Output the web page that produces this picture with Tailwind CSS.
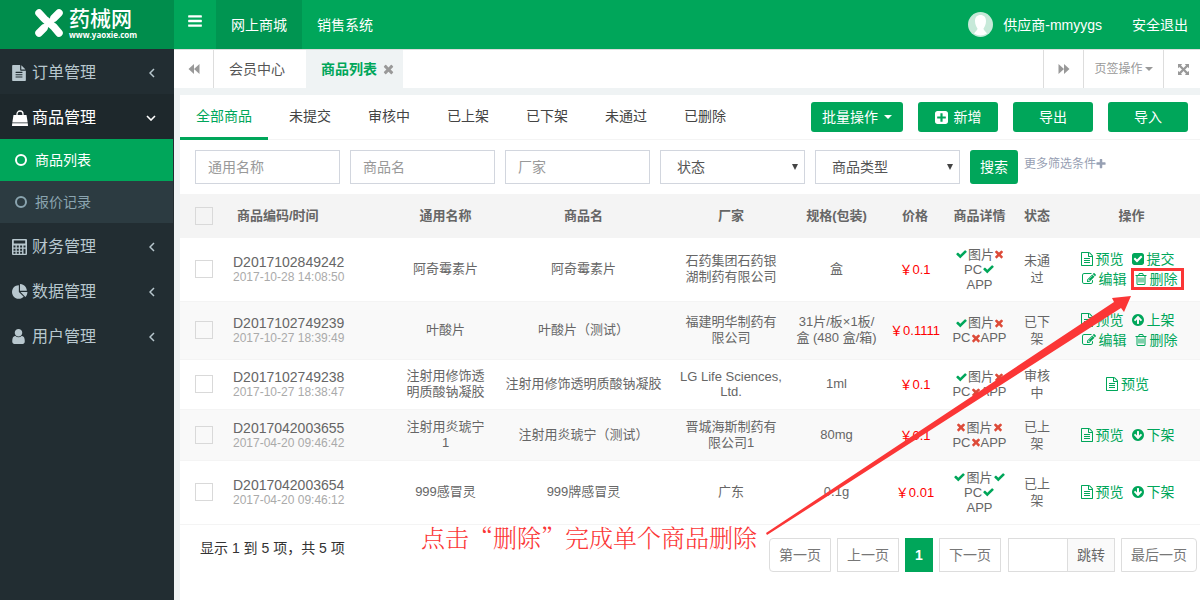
<!DOCTYPE html>
<html lang="zh-CN">
<head>
<meta charset="utf-8">
<title>商品列表</title>
<script src="https://cdn.jsdelivr.net/npm/@tailwindcss/browser@4"></script>
</head>
<body class="min-h-screen flex flex-col overflow-x-hidden bg-[#222d32] text-sm text-[#666] font-['Liberation_Sans','Noto_Sans_CJK_SC',sans-serif]">
<svg class="hidden" aria-hidden="true">
  <symbol id="bars" viewBox="0 0 1792 1792"><path d="M1664 1344v128q0 26-19 45t-45 19h-1408q-26 0-45-19t-19-45v-128q0-26 19-45t45-19h1408q26 0 45 19t19 45zm0-512v128q0 26-19 45t-45 19h-1408q-26 0-45-19t-19-45v-128q0-26 19-45t45-19h1408q26 0 45 19t19 45zm0-512v128q0 26-19 45t-45 19h-1408q-26 0-45-19t-19-45v-128q0-26 19-45t45-19h1408q26 0 45 19t19 45z"/></symbol>
  <symbol id="check" viewBox="0 0 1792 1792"><path d="M1671 566q0 40-28 68l-724 724-136 136q-28 28-68 28t-68-28l-136-136-362-362q-28-28-28-68t28-68l136-136q28-28 68-28t68 28l294 295 656-657q28-28 68-28t68 28l136 136q28 28 28 68z"/></symbol>
  <symbol id="times" viewBox="192 0 1408 1792"><path d="M1490 1322q0 40-28 68l-136 136q-28 28-68 28t-68-28l-294-294-294 294q-28 28-68 28t-68-28l-136-136q-28-28-28-68t28-68l294-294-294-294q-28-28-28-68t28-68l136-136q28-28 68-28t68 28l294 294 294-294q28-28 68-28t68 28l136 136q28 28 28 68t-28 68l-294 294 294 294q28 28 28 68z"/></symbol>
  <symbol id="plus" viewBox="192 128 1408 1536"><path d="M1600 736v192q0 40-28 68t-68 28h-416v416q0 40-28 68t-68 28h-192q-40 0-68-28t-28-68v-416h-416q-40 0-68-28t-28-68v-192q0-40 28-68t68-28h416v-416q0-40 28-68t68-28h192q40 0 68 28t28 68v416h416q40 0 68 28t28 68z"/></symbol>
  <symbol id="plus-square" viewBox="128 128 1536 1536"><path d="M1408 960v-128q0-26-19-45t-45-19h-320v-320q0-26-19-45t-45-19h-128q-26 0-45 19t-19 45v320h-320q-26 0-45 19t-19 45v128q0 26 19 45t45 19h320v320q0 26 19 45t45 19h128q26 0 45-19t19-45v-320h320q26 0 45-19t19-45zm256-544v960q0 119-84.5 203.5t-203.5 84.5h-960q-119 0-203.5-84.5t-84.5-203.5v-960q0-119 84.5-203.5t203.5-84.5h960q119 0 203.5 84.5t84.5 203.5z"/></symbol>
  <symbol id="check-square" viewBox="128 0 1536 1792"><path d="M813 1299l614-614q19-19 19-45t-19-45l-102-102q-19-19-45-19t-45 19l-467 467-211-211q-19-19-45-19t-45 19l-102 102q-19 19-19 45t19 45l358 358q19 19 45 19t45-19zm851-883v960q0 119-84.5 203.5t-203.5 84.5h-960q-119 0-203.5-84.5t-84.5-203.5v-960q0-119 84.5-203.5t203.5-84.5h960q119 0 203.5 84.5t84.5 203.5z"/></symbol>
  <symbol id="file" viewBox="128 0 1536 1792"><path d="M1596 476q14 14 28 36h-472v-472q22 14 36 28zm-476 164h544v1056q0 40-28 68t-68 28h-1344q-40 0-68-28t-28-68v-1600q0-40 28-68t68-28h800v544q0 40 28 68t68 28zm160 736v-64q0-14-9-23t-23-9h-704q-14 0-23 9t-9 23v64q0 14 9 23t23 9h704q14 0 23-9t9-23zm0-256v-64q0-14-9-23t-23-9h-704q-14 0-23 9t-9 23v64q0 14 9 23t23 9h704q14 0 23-9t9-23zm0-256v-64q0-14-9-23t-23-9h-704q-14 0-23 9t-9 23v64q0 14 9 23t23 9h704q14 0 23-9t9-23z"/></symbol>
  <symbol id="file-o" viewBox="128 0 1536 1792"><path d="M1596 380q28 28 48 76t20 88v1152q0 40-28 68t-68 28h-1344q-40 0-68-28t-28-68v-1600q0-40 28-68t68-28h896q40 0 88 20t76 48zm-444-244v376h376q-10-29-22-41l-313-313q-12-12-41-22zm384 1528v-1024h-416q-40 0-68-28t-28-68v-416h-768v1536h1280zm-1024-864q0-14 9-23t23-9h704q14 0 23 9t9 23v64q0 14-9 23t-23 9h-704q-14 0-23-9t-9-23v-64zm736 224q14 0 23 9t9 23v64q0 14-9 23t-23 9h-704q-14 0-23-9t-9-23v-64q0-14 9-23t23-9h704zm0 256q14 0 23 9t9 23v64q0 14-9 23t-23 9h-704q-14 0-23-9t-9-23v-64q0-14 9-23t23-9h704z"/></symbol>
  <symbol id="trash" viewBox="192 0 1408 1792"><path d="M704 736v576q0 14-9 23t-23 9h-64q-14 0-23-9t-9-23v-576q0-14 9-23t23-9h64q14 0 23 9t9 23zm256 0v576q0 14-9 23t-23 9h-64q-14 0-23-9t-9-23v-576q0-14 9-23t23-9h64q14 0 23 9t9 23zm256 0v576q0 14-9 23t-23 9h-64q-14 0-23-9t-9-23v-576q0-14 9-23t23-9h64q14 0 23 9t9 23zm128 724v-948h-896v948q0 22 7 40.5t14.5 27 10.5 8.5h832q3 0 10.5-8.5t14.5-27 7-40.5zm-672-1076h448l-48-117q-7-9-17-11h-317q-10 2-17 11zm928 32v64q0 14-9 23t-23 9h-96v948q0 83-47 143.5t-113 60.5h-832q-66 0-113-58.5t-47-141.5v-952h-96q-14 0-23-9t-9-23v-64q0-14 9-23t23-9h309l70-167q15-37 54-63t79-26h320q40 0 79 26t54 63l70 167h309q14 0 23 9t9 23z"/></symbol>
  <symbol id="edit" viewBox="0 0 1792 1792"><path d="M888 1184l116-116-152-152-116 116v56h96v96h56zm440-720q-16-16-33 1l-350 350q-17 17-1 33t33-1l350-350q17-17 1-33zm80 594v190q0 119-84.5 203.5t-203.5 84.5h-832q-119 0-203.5-84.5t-84.5-203.5v-832q0-119 84.5-203.5t203.5-84.5h832q63 0 117 25 15 7 18 23 3 17-9 29l-49 49q-14 14-32 8-23-6-45-6h-832q-66 0-113 47t-47 113v832q0 66 47 113t113 47h832q66 0 113-47t47-113v-126q0-13 9-22l64-64q15-15 35-7t20 29zm-96-738l288 288-672 672h-288v-288zm444 132l-92 92-288-288 92-92q28-28 68-28t68 28l152 152q28 28 28 68t-28 68z"/></symbol>
  <symbol id="arrow-up" viewBox="128 0 1536 1792"><path d="M1412 897q0-27-18-45l-362-362-91-91q-18-18-45-18t-45 18l-91 91-362 362q-18 18-18 45t18 45l91 91q18 18 45 18t45-18l189-189v502q0 26 19 45t45 19h128q26 0 45-19t19-45v-502l189 189q19 19 45 19t45-19l91-91q18-18 18-45zm252-1q0 209-103 385.5t-279.5 279.5-385.5 103-385.5-103-279.5-279.5-103-385.5 103-385.5 279.5-279.5 385.5-103 385.5 103 279.5 279.5 103 385.5z"/></symbol>
  <symbol id="pie" viewBox="0 0 1792 1792"><path d="M768 890l546 546q-106 108-247.5 168t-298.5 60q-209 0-385.5-103t-279.5-279.5-103-385.5 103-385.5 279.5-279.5 385.5-103v762zm187 6h773q0 157-60 298.5t-168 247.5zm709-128h-768v-768q209 0 385.5 103t279.5 279.5 103 385.5z"/></symbol>
  <symbol id="user" viewBox="256 128 1280 1536"><path d="M1536 1399q0 109-62.5 187t-150.5 78h-854q-88 0-150.5-78t-62.5-187q0-85 8.5-160.5t31.5-152 58.5-131 94-89 134.5-34.5q131 128 313 128t313-128q76 0 134.5 34.5t94 89 58.5 131 31.5 152 8.5 160.5zm-256-887q0 159-112.5 271.5t-271.5 112.5-271.5-112.5-112.5-271.5 112.5-271.5 271.5-112.5 271.5 112.5 112.5 271.5z"/></symbol>
  <symbol id="bag" viewBox="0 0 16 16"><path d="M1.500 5h13l1.200 7.500H.3zM.2 13.300h15.600L16 16H0z"/><path d="M5 7V4a3 3 0 0 1 6 0v3" fill="none" stroke="currentColor" stroke-width="1.300"/></symbol>
  <symbol id="calc" viewBox="0 0 15 16"><path fill-rule="evenodd" d="M1 0h13a1 1 0 0 1 1 1v14a1 1 0 0 1-1 1H1a1 1 0 0 1-1-1V1a1 1 0 0 1 1-1zm.8 1.500v3h11.400v-3zM1.500 6.500v2h2v-2zm3.300 0v2h2v-2zm3.300 0v2h2v-2zm3.400 0v2h2v-2zm-10 3.200v2h2v-2zm3.300 0v2h2v-2zm3.300 0v2h2v-2zm3.400 0v5h2v-5zm-10 3.100v2h2v-2zm3.300 0v2h2v-2zm3.300 0v2h2v-2z"/></symbol>
  <symbol id="left" viewBox="0 0 6 10"><path d="M5 1L1 5l4 4" fill="none" stroke="currentColor" stroke-width="1.500"/></symbol>
  <symbol id="down" viewBox="0 0 10 6"><path d="M1 1l4 4 4-4" fill="none" stroke="currentColor" stroke-width="1.600"/></symbol>
  <symbol id="back" viewBox="0 0 12 12"><path d="M6 1v10L.5 6zM11.500 1v10L6 6z"/></symbol>
  <symbol id="expand" viewBox="0 0 12 12"><path d="M0 0h4.500L3.300 1.500 6 4.300l2.700-2.800L7.500 0H12v4.500l-1.500-1.200L7.700 6l2.800 2.700L12 7.500V12H7.500l1.200-1.500L6 7.700l-2.700 2.800L4.500 12H0V7.500l1.500 1.200L4.300 6 1.500 3.300 0 4.500z"/></symbol>
  <symbol id="caret" viewBox="0 0 8 4"><path d="M0 0h8L4 4z"/></symbol>
</svg>

<header class="flex h-[49px] shrink-0 bg-[#00a65a] text-white">
  <a href="#" aria-label="药械网" class="flex w-[174px] shrink-0 items-center gap-1.5 bg-[#008d4c] pb-[3px] pl-[35px]">
    <svg class="size-7 shrink-0" viewBox="0 0 28 28" fill="none" stroke="#fff" stroke-linecap="round"><path d="M4 4l5 5.500c2 2.200 8 6.500 10 8.500l5 6" stroke-width="7.500"/><path d="M24 4l-5 5M9 19l-5 5" stroke-width="7.500"/><path d="M19 9L9 19" stroke-width="5"/></svg>
    <span class="flex flex-col">
      <span class="text-[21px] leading-[24px] font-medium">药械网</span>
      <span class="text-[8px] leading-[8px] font-bold font-['Open_Sans','Noto_Sans',sans-serif]">www.yaoxie.com</span>
    </span>
  </a>
  <button type="button" aria-label="菜单" class="flex w-[42px] justify-center pt-[13px]"><svg class="size-4 fill-current"><use href="#bars"/></svg></button>
  <nav class="flex">
    <a href="#" class="flex w-[86px] items-center justify-center bg-[#009551]">网上商城</a>
    <a href="#" class="flex w-[86px] items-center justify-center">销售系统</a>
  </nav>
  <div class="ml-auto flex items-center pr-3">
    <svg class="size-[25px]" viewBox="0 0 25 25"><circle cx="12.500" cy="12.500" r="12.500" fill="#c7e9d9"/><path d="M12.500 3c3.500 0 5.500 2.200 5.500 6 0 3.500-1.500 6-2.500 7.500 0 1.500 2 3 3.500 5a12.500 12.500 0 0 1-13 0c1.500-2 3.500-3.500 3.500-5C8.500 15 7 12.500 7 9c0-3.800 2-6 5.500-6z" fill="#fff"/></svg>
    <a href="#" class="ml-2.5">供应商-mmyygs</a>
    <a href="#" class="ml-[30px]">安全退出</a>
  </div>
</header>

<div class="flex grow">
  <aside class="w-[174px] shrink-0 text-base text-[#b8c7ce]">
    <a href="#" class="flex h-[45px] items-center pt-0.5 pl-3"><svg class="h-4 w-[14px] fill-current"><use href="#file"/></svg><span class="ml-1.5">订单管理</span><svg class="mr-[19px] ml-auto h-2.5 w-1.5"><use href="#left"/></svg></a>
    <a href="#" class="flex h-[45px] items-center bg-[#1e282c] pt-0.5 pl-3 text-white"><svg class="size-4 fill-current"><use href="#bag"/></svg><span class="ml-1">商品管理</span><svg class="mr-[18px] ml-auto h-1.5 w-2.5"><use href="#down"/></svg></a>
    <div class="mr-px bg-[#2c3b41] text-sm">
      <a href="#" class="flex h-[42px] items-center bg-[#00a65a] pl-[15px] text-white"><span class="size-3 rounded-full border-2 border-current"></span><span class="ml-2">商品列表</span></a>
      <a href="#" class="flex h-[42px] items-center pl-[15px] text-[#8aa4af]"><span class="size-3 rounded-full border-2 border-current"></span><span class="ml-2">报价记录</span></a>
    </div>
    <a href="#" class="flex h-[45px] items-center pt-0.5 pl-3"><svg class="h-4 w-[15px] fill-current"><use href="#calc"/></svg><span class="ml-[5px]">财务管理</span><svg class="mr-[19px] ml-auto h-2.5 w-1.5"><use href="#left"/></svg></a>
    <a href="#" class="flex h-[45px] items-center pt-0.5 pl-3"><svg class="size-4 fill-current"><use href="#pie"/></svg><span class="ml-1">数据管理</span><svg class="mr-[19px] ml-auto h-2.5 w-1.5"><use href="#left"/></svg></a>
    <a href="#" class="flex h-[45px] items-center pt-0.5 pl-3"><svg class="h-[15px] w-[13px] fill-current"><use href="#user"/></svg><span class="ml-[7px]">用户管理</span><svg class="mr-[19px] ml-auto h-2.5 w-1.5"><use href="#left"/></svg></a>
  </aside>

  <main class="flex min-w-0 grow flex-col bg-[#eff3f4]">
    <div class="flex h-[39px] shrink-0 border-t border-[#ddd] bg-white text-[#999]">
      <button type="button" aria-label="向左" class="flex w-10 items-center justify-center border-r border-[#ddd]"><svg class="size-3 fill-current"><use href="#back"/></svg></button>
      <a href="#" class="flex w-[92px] items-center pl-[15px] text-[#555]">会员中心</a>
      <div class="flex w-[97px] items-center bg-[#eff3f4] pl-[15px]"><a href="#" class="font-bold text-[#00a65a]">商品列表</a><button type="button" aria-label="关闭" class="ml-1.5"><svg class="h-3.5 w-[11px] fill-current"><use href="#times"/></svg></button></div>
      <button type="button" aria-label="向右" class="ml-auto flex w-10 items-center justify-center border-l border-[#ddd]"><svg class="size-3 rotate-180 fill-current"><use href="#back"/></svg></button>
      <button type="button" class="flex w-20 items-center justify-center gap-0.5 border-l border-[#ddd] text-xs">页签操作<svg class="h-1 w-2 fill-current"><use href="#caret"/></svg></button>
      <button type="button" aria-label="全屏" class="flex w-[37px] items-center justify-center border-l border-[#ddd] pl-0.5"><svg class="size-[11px] fill-current"><use href="#expand"/></svg></button>
    </div>

    <section class="relative mt-[7px] ml-1.5 grow bg-white">
      <div class="flex h-[45px] justify-between border-b border-[#f4f4f4]">
        <nav class="flex gap-[5px] text-[#444]">
          <a href="#" class="-mb-px border-b-3 border-[#00a65a] px-4 pt-[11px] text-[#00a65a]">全部商品</a>
          <a href="#" class="px-4 pt-[11px]">未提交</a>
          <a href="#" class="px-4 pt-[11px]">审核中</a>
          <a href="#" class="px-4 pt-[11px]">已上架</a>
          <a href="#" class="px-4 pt-[11px]">已下架</a>
          <a href="#" class="px-4 pt-[11px]">未通过</a>
          <a href="#" class="px-4 pt-[11px]">已删除</a>
        </nav>
        <div class="flex gap-[15px] pt-[7px] pr-3 text-white">
          <button type="button" class="flex h-[30px] w-[92px] items-center justify-center gap-1.5 rounded-[3px] bg-[#00a65a]">批量操作<svg class="h-1 w-2 fill-current"><use href="#caret"/></svg></button>
          <button type="button" class="flex h-[30px] w-20 items-center justify-center gap-1.5 rounded-[3px] bg-[#00a65a]"><svg class="size-[13px] fill-current"><use href="#plus-square"/></svg>新增</button>
          <button type="button" class="h-[30px] w-20 rounded-[3px] bg-[#00a65a]">导出</button>
          <button type="button" class="h-[30px] w-20 rounded-[3px] bg-[#00a65a]">导入</button>
        </div>
      </div>

      <form class="flex gap-2.5 px-[15px] py-2.5">
        <input type="text" aria-label="通用名称" placeholder="通用名称" class="h-[34px] w-[145px] border border-[#d2d6de] px-3 placeholder:text-[#999]">
        <input type="text" aria-label="商品名" placeholder="商品名" class="h-[34px] w-[145px] border border-[#d2d6de] px-3 placeholder:text-[#999]">
        <input type="text" aria-label="厂家" placeholder="厂家" class="h-[34px] w-[145px] border border-[#d2d6de] px-3 placeholder:text-[#999]">
        <div class="relative"><select aria-label="状态" class="h-[34px] w-[145px] appearance-none border border-[#d2d6de] px-4 text-[#555]"><option>状态</option></select><svg class="pointer-events-none absolute top-[14px] right-[7px] h-1.5 w-1.5 fill-[#444]" viewBox="0 0 8 8"><path d="M0 0h8L4 8z"/></svg></div>
        <div class="relative"><select aria-label="商品类型" class="h-[34px] w-[145px] appearance-none border border-[#d2d6de] px-4 text-[#555]"><option>商品类型</option></select><svg class="pointer-events-none absolute top-[14px] right-[7px] h-1.5 w-1.5 fill-[#444]" viewBox="0 0 8 8"><path d="M0 0h8L4 8z"/></svg></div>
        <button type="button" class="h-[34px] w-12 rounded-[3px] bg-[#00a65a] text-white">搜索</button>
        <a href="#" class="-ml-1 flex items-center self-start pt-1.5 text-xs text-[#97a0b3]">更多筛选条件<svg class="size-2.5 fill-current"><use href="#plus"/></svg></a>
      </form>

      <table class="w-full table-fixed text-center text-[13px] leading-4">
        <colgroup><col class="w-[45px]"><col class="w-[166px]"><col class="w-[109px]"><col><col class="w-[128px]"><col class="w-[83px]"><col class="w-[74px]"><col class="w-[55px]"><col class="w-[60px]"><col class="w-[133px]"></colgroup>
        <thead>
          <tr class="h-11 bg-[#f4f4f4]">
            <th class="pl-[15px] text-left"><input type="checkbox" aria-label="全选" class="block size-[18px] appearance-none border border-[#d9d9d9]"></th>
            <th class="pl-3 text-left">商品编码/时间</th><th>通用名称</th><th>商品名</th><th>厂家</th><th>规格(包装)</th><th>价格</th><th class="whitespace-nowrap">商品详情</th><th>状态</th><th class="pr-1">操作</th>
          </tr>
        </thead>
        <tbody>
          <tr class="h-[63px]">
            <td class="pl-[15px]"><input type="checkbox" aria-label="选择 D2017102849242" class="block size-[18px] appearance-none border border-[#d9d9d9]"></td>
            <td class="pl-2 text-left text-sm leading-4">D2017102849242<br><span class="block text-xs leading-[14px] text-[#aaa]">2017-10-28 14:08:50</span></td>
            <td>阿奇霉素片</td><td>阿奇霉素片</td><td>石药集团石药银<br>湖制药有限公司</td><td>盒</td><td class="pt-0.5 text-[#f00]">￥0.1</td>
            <td class="leading-[15px]"><div class="flex items-center justify-center"><svg class="h-3 w-[13px] fill-[#00a65a]"><use href="#check"/></svg>图片<svg class="h-3 w-[10px] fill-[#dd4b39]"><use href="#times"/></svg></div><div class="flex items-center justify-center">PC<svg class="h-3 w-[13px] fill-[#00a65a]"><use href="#check"/></svg></div>APP</td>
            <td class="leading-[17px]">未通<br>过</td>
            <td class="text-sm leading-5 text-[#00a65a]">
              <div class="flex justify-center gap-2 pr-3"><a href="#" class="flex items-center gap-[3px]"><svg class="h-3.5 w-3 fill-current"><use href="#file-o"/></svg>预览</a><a href="#" class="flex items-center gap-[3px]"><svg class="h-3.5 w-3 fill-current"><use href="#check-square"/></svg>提交</a></div>
              <div class="flex justify-center gap-2 pr-2"><a href="#" class="flex items-center gap-[3px]"><svg class="size-3.5 fill-current"><use href="#edit"/></svg>编辑</a><a href="#" class="relative flex items-center gap-[3px]"><svg class="h-3.5 w-3 fill-current"><use href="#trash"/></svg>删除<span class="absolute -inset-y-px -right-1.5 -left-1 border-3 border-[#fb3636]"></span></a></div>
            </td>
          </tr>
          <tr class="h-[58px] border-t border-[#f4f4f4] bg-[#f9f9f9]">
            <td class="pl-[15px]"><input type="checkbox" aria-label="选择 D2017102749239" class="block size-[18px] appearance-none border border-[#d9d9d9]"></td>
            <td class="pl-2 text-left text-sm leading-4">D2017102749239<br><span class="block text-xs leading-[14px] text-[#aaa]">2017-10-27 18:39:49</span></td>
            <td>叶酸片</td><td>叶酸片（测试）</td><td>福建明华制药有<br>限公司</td><td>31片/板×1板/<br>盒 (480 盒/箱)</td><td class="pt-0.5 whitespace-nowrap text-[#f00]">￥0.1111</td>
            <td class="leading-[15px]"><div class="flex items-center justify-center"><svg class="h-3 w-[13px] fill-[#00a65a]"><use href="#check"/></svg>图片<svg class="h-3 w-[10px] fill-[#dd4b39]"><use href="#times"/></svg></div><div class="flex items-center justify-center">PC<svg class="h-3 w-[10px] fill-[#dd4b39]"><use href="#times"/></svg>APP</div></td>
            <td class="leading-[17px]">已下<br>架</td>
            <td class="text-sm leading-5 text-[#00a65a]">
              <div class="flex justify-center gap-2 pr-3"><a href="#" class="flex items-center gap-[3px]"><svg class="h-3.5 w-3 fill-current"><use href="#file-o"/></svg>预览</a><a href="#" class="flex items-center gap-[3px]"><svg class="h-3.5 w-3 fill-current"><use href="#arrow-up"/></svg>上架</a></div>
              <div class="flex justify-center gap-2 pr-2"><a href="#" class="flex items-center gap-[3px]"><svg class="size-3.5 fill-current"><use href="#edit"/></svg>编辑</a><a href="#" class="flex items-center gap-[3px]"><svg class="h-3.5 w-3 fill-current"><use href="#trash"/></svg>删除</a></div>
            </td>
          </tr>
          <tr class="h-[50px] border-t border-[#f4f4f4]">
            <td class="pl-[15px]"><input type="checkbox" aria-label="选择 D2017102749238" class="block size-[18px] appearance-none border border-[#d9d9d9]"></td>
            <td class="pl-2 text-left text-sm leading-4">D2017102749238<br><span class="block text-xs leading-[14px] text-[#aaa]">2017-10-27 18:38:47</span></td>
            <td>注射用修饰透<br>明质酸钠凝胶</td><td class="whitespace-nowrap">注射用修饰透明质酸钠凝胶</td><td class="leading-[15px]">LG Life Sciences,<br>Ltd.</td><td>1ml</td><td class="pt-0.5 text-[#f00]">￥0.1</td>
            <td class="leading-[15px]"><div class="flex items-center justify-center"><svg class="h-3 w-[13px] fill-[#00a65a]"><use href="#check"/></svg>图片<svg class="h-3 w-[10px] fill-[#dd4b39]"><use href="#times"/></svg></div><div class="flex items-center justify-center">PC<svg class="h-3 w-[10px] fill-[#dd4b39]"><use href="#times"/></svg>APP</div></td>
            <td class="leading-[17px]">审核<br>中</td>
            <td class="text-sm leading-5 text-[#00a65a]"><div class="flex justify-center pr-3"><a href="#" class="flex items-center gap-[3px]"><svg class="h-3.5 w-3 fill-current"><use href="#file-o"/></svg>预览</a></div></td>
          </tr>
          <tr class="h-[51px] border-t border-[#f4f4f4] bg-[#f9f9f9]">
            <td class="pl-[15px]"><input type="checkbox" aria-label="选择 D2017042003655" class="block size-[18px] appearance-none border border-[#d9d9d9]"></td>
            <td class="pl-2 text-left text-sm leading-4">D2017042003655<br><span class="block text-xs leading-[14px] text-[#aaa]">2017-04-20 09:46:42</span></td>
            <td>注射用炎琥宁<br>1</td><td>注射用炎琥宁（测试）</td><td>晋城海斯制药有<br>限公司1</td><td>80mg</td><td class="pt-0.5 text-[#f00]">￥0.1</td>
            <td class="leading-[15px]"><div class="flex items-center justify-center"><svg class="h-3 w-[10px] fill-[#dd4b39]"><use href="#times"/></svg>图片<svg class="h-3 w-[10px] fill-[#dd4b39]"><use href="#times"/></svg></div><div class="flex items-center justify-center">PC<svg class="h-3 w-[10px] fill-[#dd4b39]"><use href="#times"/></svg>APP</div></td>
            <td class="leading-[17px]">已上<br>架</td>
            <td class="text-sm leading-5 text-[#00a65a]"><div class="flex justify-center gap-2 pr-3"><a href="#" class="flex items-center gap-[3px]"><svg class="h-3.5 w-3 fill-current"><use href="#file-o"/></svg>预览</a><a href="#" class="flex items-center gap-[3px]"><svg class="h-3.5 w-3 rotate-180 fill-current"><use href="#arrow-up"/></svg>下架</a></div></td>
          </tr>
          <tr class="h-16 border-y border-[#f4f4f4]">
            <td class="pl-[15px]"><input type="checkbox" aria-label="选择 D2017042003654" class="block size-[18px] appearance-none border border-[#d9d9d9]"></td>
            <td class="pl-2 text-left text-sm leading-4">D2017042003654<br><span class="block text-xs leading-[14px] text-[#aaa]">2017-04-20 09:46:12</span></td>
            <td>999感冒灵</td><td>999牌感冒灵</td><td>广东</td><td>0.1g</td><td class="pt-0.5 text-[#f00]">￥0.01</td>
            <td class="leading-[15px]"><div class="flex items-center justify-center"><svg class="h-3 w-[13px] fill-[#00a65a]"><use href="#check"/></svg>图片<svg class="h-3 w-[13px] fill-[#00a65a]"><use href="#check"/></svg></div><div class="flex items-center justify-center">PC<svg class="h-3 w-[13px] fill-[#00a65a]"><use href="#check"/></svg></div>APP</td>
            <td class="leading-[17px]">已上<br>架</td>
            <td class="text-sm leading-5 text-[#00a65a]"><div class="flex justify-center gap-2 pr-3"><a href="#" class="flex items-center gap-[3px]"><svg class="h-3.5 w-3 fill-current"><use href="#file-o"/></svg>预览</a><a href="#" class="flex items-center gap-[3px]"><svg class="h-3.5 w-3 rotate-180 fill-current"><use href="#arrow-up"/></svg>下架</a></div></td>
          </tr>
        </tbody>
      </table>

      <div class="flex justify-between pt-[13px] pr-[3px] pb-7 pl-5">
        <p class="text-[#333]">显示 1 到 5 项，共 5 项</p>
        <div class="flex gap-1.5 text-[#777]">
          <button type="button" class="h-[34px] w-[62px] rounded-l-[4px] border border-[#ddd]">第一页</button>
          <button type="button" class="h-[34px] w-[62px] border border-[#ddd]">上一页</button>
          <button type="button" class="h-[34px] w-7 bg-[#00a65a] font-bold text-white">1</button>
          <button type="button" class="h-[34px] w-[62px] border border-[#ddd]">下一页</button>
          <div class="ml-px flex"><input type="text" aria-label="页码" class="h-[34px] w-[59px] border border-r-0 border-[#ddd] px-2"><button type="button" class="h-[34px] w-12 border border-[#ddd] bg-[#fafafa] text-[#666]">跳转</button></div>
          <button type="button" class="h-[34px] w-[76px] rounded-r-[4px] border border-[#ddd]">最后一页</button>
        </div>
      </div>

      <p class="absolute top-[426px] right-[443px] text-2xl font-light whitespace-nowrap text-[#fb3636] font-['Noto_Serif_CJK_SC','Liberation_Serif','Noto_Sans_CJK_SC',serif]">点击“删除”完成单个商品删除</p>
      <svg class="pointer-events-none absolute top-[200px] right-[68px] h-[240px] w-[367px] fill-[#fb3636]" viewBox="0 0 367 240"><path d="M366 1L347 3l2 4L1 238l1 2L356 13l3 4z"/></svg>
    </section>
  </main>
</div>
</body>
</html>
